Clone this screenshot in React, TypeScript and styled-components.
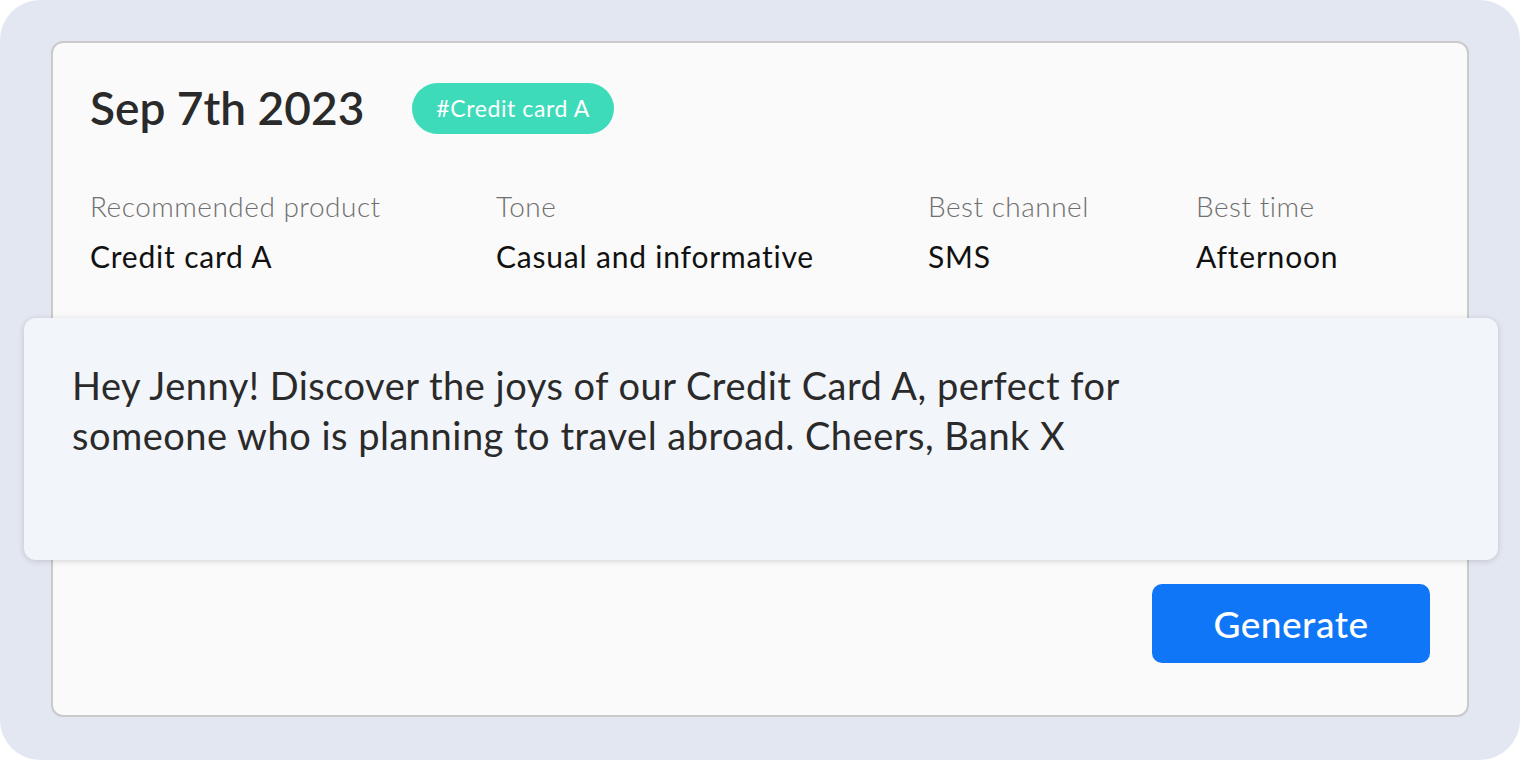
import styled, { createGlobalStyle } from 'styled-components';

const GlobalStyle = createGlobalStyle`
  body {
    margin: 0;
    background: #ffffff;
    font-family: Lato, 'Liberation Sans', sans-serif;
  }
`;

const fields = [
  { label: 'Recommended product', value: 'Credit card A', width: 406 },
  { label: 'Tone', value: 'Casual and informative', width: 432 },
  { label: 'Best channel', value: 'SMS', width: 268 },
  { label: 'Best time', value: 'Afternoon', width: 200 },
];

const App = () => {
  return (
    <>
      <GlobalStyle />
      <Page>
        <Card>
          <Header>
            <Title>Sep 7th 2023</Title>
            <Tag>#Credit card A</Tag>
          </Header>
          <Fields>
            {fields.map((f) => (
              <Field key={f.label} $width={f.width}>
                <FieldLabel>{f.label}</FieldLabel>
                <FieldValue>{f.value}</FieldValue>
              </Field>
            ))}
          </Fields>
          <Message>
            Hey Jenny! Discover the joys of our Credit Card A, perfect for
            <br />
            someone who is planning to travel abroad. Cheers, Bank X
          </Message>
          <Footer>
            <GenerateButton>Generate</GenerateButton>
          </Footer>
        </Card>
      </Page>
    </>
  );
};

/////////////////////////////////////////////////////////////////////////////////////////

const Page = styled.div`
  width: 1520px;
  height: 760px;
  box-sizing: border-box;
  background: #e3e7f2;
  border-radius: 40px;
  padding: 41px 51px 43px;
`;

const Card = styled.div`
  height: 100%;
  box-sizing: border-box;
  background: #fafafa;
  border: 2px solid #cacaca;
  border-radius: 12px;
  display: flex;
  flex-direction: column;
`;

const Header = styled.div`
  display: flex;
  align-items: center;
  gap: 48px;
  padding: 39px 37px 0;
`;

const Title = styled.h1`
  margin: 0;
  font-size: 46px;
  line-height: 52px;
  font-weight: 600;
  color: #2a2a2a;
`;

const Tag = styled.span`
  display: inline-flex;
  align-items: center;
  height: 51px;
  padding: 0 24px;
  border-radius: 26px;
  background: #3ddbb9;
  color: #ffffff;
  font-size: 23px;
  letter-spacing: 0.6px;
  font-weight: 400;
`;

const Fields = styled.div`
  display: flex;
  padding: 55px 37px 0;
`;

const Field = styled.div<{ $width: number }>`
  width: ${(p) => p.$width}px;
  display: flex;
  flex-direction: column;
  gap: 16px;
`;

const FieldLabel = styled.span`
  font-size: 28px;
  line-height: 34px;
  letter-spacing: 0.5px;
  font-weight: 300;
  color: #6f6f6f;
`;

const FieldValue = styled.span`
  font-size: 30px;
  line-height: 34px;
  letter-spacing: 0.8px;
  font-weight: 400;
  color: #111111;
`;

const Message = styled.div`
  margin: 45px -31px 0 -29px;
  height: 242px;
  box-sizing: border-box;
  padding: 42px 48px;
  background: #f2f5f9;
  border-radius: 12px;
  box-shadow: 0 1px 6px rgba(0, 0, 0, 0.16);
  font-size: 38px;
  line-height: 50px;
  letter-spacing: 0.5px;
  color: #2a2a2a;
`;

const Footer = styled.div`
  display: flex;
  justify-content: flex-end;
  padding: 24px 37px 0;
`;

const GenerateButton = styled.button`
  width: 278px;
  height: 79px;
  border: 0;
  border-radius: 10px;
  background: #0f77f7;
  color: #ffffff;
  font-family: inherit;
  font-size: 37px;
  letter-spacing: 0.5px;
  font-weight: 500;
  cursor: pointer;
`;

export default App;
